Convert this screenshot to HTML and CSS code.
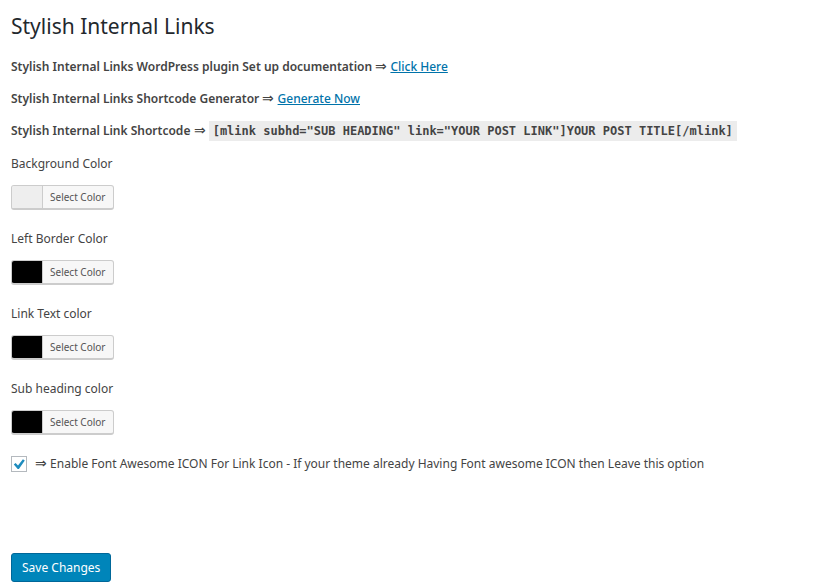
FILE: index.html
```html
<!DOCTYPE html>
<html lang="en">
<head>
<meta charset="utf-8">
<title>Stylish Internal Links</title>
<link rel="stylesheet" href="styles.css">
</head>
<body>
<main class="wrap">
  <h1 class="title">Stylish Internal Links</h1>
  <p class="info">Stylish Internal Links WordPress plugin Set up documentation <span class="arrow">⇒</span> <a href="#docs">Click Here</a></p>
  <p class="info">Stylish Internal Links Shortcode Generator <span class="arrow">⇒</span> <a href="#generate">Generate Now</a></p>
  <p class="info">Stylish Internal Link Shortcode <span class="arrow">⇒</span> <code class="shortcode">[mlink subhd="SUB HEADING" link="YOUR POST LINK"]YOUR POST TITLE[/mlink]</code></p>
  <form class="settings">
    <div class="field">
      <span class="field-label" id="bg-label">Background Color</span>
      <button type="button" class="picker" aria-describedby="bg-label"><span class="swatch swatch-light"></span><span class="picker-text">Select Color</span></button>
    </div>
    <div class="field">
      <span class="field-label" id="border-label">Left Border Color</span>
      <button type="button" class="picker" aria-describedby="border-label"><span class="swatch"></span><span class="picker-text">Select Color</span></button>
    </div>
    <div class="field">
      <span class="field-label" id="link-label">Link Text color</span>
      <button type="button" class="picker" aria-describedby="link-label"><span class="swatch"></span><span class="picker-text">Select Color</span></button>
    </div>
    <div class="field">
      <span class="field-label" id="sub-label">Sub heading color</span>
      <button type="button" class="picker" aria-describedby="sub-label"><span class="swatch"></span><span class="picker-text">Select Color</span></button>
    </div>
    <div class="option">
      <span class="check">
        <input type="checkbox" id="fa-icons" class="check-input" checked>
        <svg class="check-mark" viewBox="0 0 16 16" aria-hidden="true"><path d="M2.8 8.4 4.6 6.9 7 9.4 11.9 3.2 13.8 4.4 7.9 12.9 6.7 12.9Z"/></svg>
      </span>
      <label for="fa-icons"><span class="arrow">⇒</span> Enable Font Awesome ICON For Link Icon - If your theme already Having Font awesome ICON then Leave this option</label>
    </div>
    <button type="submit" class="save">Save Changes</button>
  </form>
</main>
</body>
</html>
```
FILE: styles.css
```css
* {
  box-sizing: border-box;
}

body {
  margin: 0;
  background: #fff;
  color: #444;
  font: 12px/20px "Noto Sans", "Open Sans", sans-serif;
}

.wrap {
  padding: 11px 11px 0;
}

.title {
  margin: 0 0 16px;
  color: #23282d;
  font-size: 21px;
  font-weight: 400;
  line-height: 30px;
}

.info {
  margin: 0 0 12px;
  font-weight: 600;
}

.info a {
  color: #0073aa;
  font-weight: 500;
}

.arrow {
  font-size: 14px;
  font-weight: 500;
  line-height: 1;
}

.shortcode {
  display: inline-block;
  padding: 0 4px;
  background: #ececec;
  font: bold 12px/20px "DejaVu Sans Mono", monospace;
  vertical-align: top;
}

.settings {
  padding-top: 1px;
}

.field {
  display: flex;
  flex-direction: column;
  align-items: flex-start;
  gap: 11px;
  margin-bottom: 19px;
}

.picker {
  display: flex;
  height: 25px;
  padding: 0;
  overflow: hidden;
  border: 1px solid #ccc;
  border-bottom-width: 2px;
  border-radius: 3px;
  background: #f7f7f7;
  color: #555;
  font: inherit;
  font-size: 10px;
  line-height: 22px;
}

.swatch {
  width: 30px;
  background: #000;
}

.swatch-light {
  background: #eee;
}

.picker-text {
  padding: 0 7px;
  border-left: 1px solid #ccc;
}

.option {
  display: flex;
  align-items: center;
  gap: 8px;
  margin-bottom: 79px;
}

.check {
  position: relative;
  width: 16px;
  height: 16px;
}

.check-input {
  appearance: none;
  display: block;
  width: 16px;
  height: 16px;
  margin: 0;
  border: 1px solid #b4b9be;
  background: #fff;
}

.check-mark {
  position: absolute;
  inset: 0;
  fill: #1e8cbe;
  pointer-events: none;
}

.save {
  height: 29px;
  padding: 0 10px;
  border: 1px solid #006799;
  border-radius: 3px;
  background: #0085ba;
  color: #fff;
  font: inherit;
}
```
